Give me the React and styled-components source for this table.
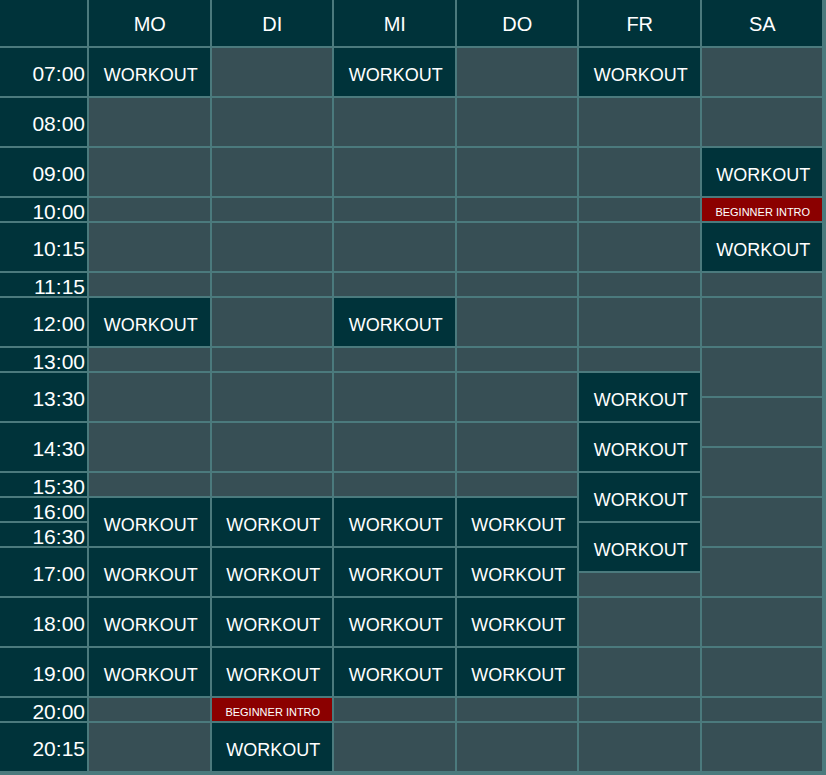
import React from "react";
import styled, { createGlobalStyle, css } from "styled-components";

const GlobalStyle = createGlobalStyle`
  html, body {
    margin: 0;
    padding: 0;
    background: #4b7a7d;
  }
  body {
    font-family: "Liberation Sans", Arial, sans-serif;
  }
`;

const Timetable = styled.div`
  box-sizing: border-box;
  width: 826px;
  height: 775px;
  display: grid;
  grid-template-columns: 87px repeat(6, 1fr);
  grid-template-rows: 46px repeat(29, 23px);
  gap: 2px;
  padding: 0 4px 2px 0;
  background: #4b7a7d;
  font-family: "Liberation Sans", Arial, sans-serif;
  color: #ffffff;
`;

const Cell = styled.div`
  box-sizing: border-box;
  grid-column: ${(p) => p.$col};
  grid-row: ${(p) => p.$row} / span ${(p) => p.$span || 1};
  display: flex;
  align-items: center;
  min-width: 0;
  overflow: hidden;
  white-space: nowrap;
`;

const HeaderCell = styled(Cell)`
  background: #00333a;
  justify-content: center;
  font-size: 20px;
  padding: 2px 0 0 1px;
`;

const TimeCell = styled(Cell)`
  background: #00333a;
  justify-content: flex-end;
  padding: 4px 2px 0 0;
  font-size: 21px;
`;

const kinds = {
  workout: css`
    background: #00333a;
    font-size: 18px;
    padding: 7px 0 0 3px;
  `,
  empty: css`
    background: #374f55;
  `,
  intro: css`
    background: #8b0000;
    font-size: 11px;
    padding: 4px 0 0 2px;
  `,
};

const SlotCell = styled(Cell)`
  justify-content: center;
  ${(p) => kinds[p.$kind]}
`;

const days = ["MO", "DI", "MI", "DO", "FR", "SA"];

const times = [
  ["07:00", 0, 2],
  ["08:00", 2, 2],
  ["09:00", 4, 2],
  ["10:00", 6, 1],
  ["10:15", 7, 2],
  ["11:15", 9, 1],
  ["12:00", 10, 2],
  ["13:00", 12, 1],
  ["13:30", 13, 2],
  ["14:30", 15, 2],
  ["15:30", 17, 1],
  ["16:00", 18, 1],
  ["16:30", 19, 1],
  ["17:00", 20, 2],
  ["18:00", 22, 2],
  ["19:00", 24, 2],
  ["20:00", 26, 1],
  ["20:15", 27, 2],
];

const W = "workout";
const E = "empty";
const I = "intro";

const standard = (overrides) =>
  [
    [0, 2], [2, 2], [4, 2], [6, 1], [7, 2], [9, 1], [10, 2], [12, 1],
    [13, 2], [15, 2], [17, 1], [18, 2], [20, 2], [22, 2], [24, 2], [26, 1], [27, 2],
  ].map(([s, n]) => [s, n, overrides[s] || E]);

const columns = [
  standard({ 0: W, 10: W, 18: W, 20: W, 22: W, 24: W }),
  standard({ 18: W, 20: W, 22: W, 24: W, 26: I, 27: W }),
  standard({ 0: W, 10: W, 18: W, 20: W, 22: W, 24: W }),
  standard({ 18: W, 20: W, 22: W, 24: W }),
  [
    [0, 2, W], [2, 2, E], [4, 2, E], [6, 1, E], [7, 2, E], [9, 1, E], [10, 2, E],
    [12, 1, E], [13, 2, W], [15, 2, W], [17, 2, W], [19, 2, W], [21, 1, E],
    [22, 2, E], [24, 2, E], [26, 1, E], [27, 2, E],
  ],
  [
    [0, 2, E], [2, 2, E], [4, 2, W], [6, 1, I], [7, 2, W], [9, 1, E], [10, 2, E],
    [12, 2, E], [14, 2, E], [16, 2, E], [18, 2, E], [20, 2, E], [22, 2, E],
    [24, 2, E], [26, 1, E], [27, 2, E],
  ],
];

const labels = {
  workout: "WORKOUT",
  intro: "BEGINNER INTRO",
  empty: "",
};

export default function App() {
  return (
    <>
      <GlobalStyle />
      <Timetable>
        <HeaderCell $col={1} $row={1} />
        {days.map((d, i) => (
          <HeaderCell key={d} $col={i + 2} $row={1}>
            {d}
          </HeaderCell>
        ))}
        {times.map(([t, s, n]) => (
          <TimeCell key={t} $col={1} $row={s + 2} $span={n}>
            {t}
          </TimeCell>
        ))}
        {columns.map((cells, ci) =>
          cells.map(([s, n, k]) => (
            <SlotCell key={`${ci}-${s}`} $col={ci + 2} $row={s + 2} $span={n} $kind={k}>
              {labels[k]}
            </SlotCell>
          ))
        )}
      </Timetable>
    </>
  );
}
